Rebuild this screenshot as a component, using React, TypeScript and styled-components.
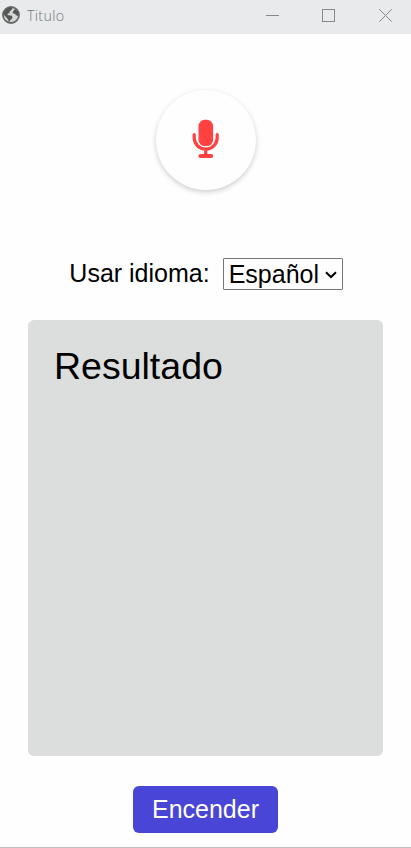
import React from "react";
import styled, { createGlobalStyle } from "styled-components";

const GlobalStyle = createGlobalStyle`
  *, *::before, *::after { box-sizing: border-box; }
  body {
    margin: 0;
    background: #fefefe;
    color: #000;
    font-family: "Liberation Sans", Arial, sans-serif;
  }
`;

const AppWindow = styled.div`
  display: flex;
  flex-direction: column;
  width: 100%;
  height: 848px;
  overflow: hidden;
  background: #fefefe;
  border-bottom: 1px solid #c3c3c3;
`;

const TitleBar = styled.header`
  display: flex;
  align-items: center;
  flex: none;
  height: 34px;
  padding-bottom: 3px;
  padding-left: 2px;
  background: #e8eaeb;
`;

const WindowTitle = styled.span`
  flex: 1;
  margin-left: 7px;
  color: #77797a;
  font: 300 14.3px/20px "Open Sans", "Segoe UI", sans-serif;
  letter-spacing: 0.3px;
`;

const WindowControls = styled.div`
  display: flex;
  gap: 43px;
  margin-right: 19px;

  svg { display: block; }
  svg:last-child { margin-left: 1px; }
`;

const Content = styled.main`
  display: flex;
  flex-direction: column;
  align-items: center;
  padding: 56px 28px 0;
`;

const MicButton = styled.button`
  display: flex;
  align-items: center;
  justify-content: center;
  width: 100px;
  height: 100px;
  padding: 0 0 2px;
  border: 0;
  border-radius: 50%;
  background: #fefefe;
  box-shadow: 0 2px 5px rgba(60, 70, 75, 0.26);
`;

const LanguageRow = styled.div`
  display: flex;
  align-items: center;
  gap: 13px;
  height: 32px;
  margin-top: 68px;
`;

const LanguageLabel = styled.label`
  padding: 0 0 2px 1px;
  font-size: 25px;
  line-height: 30px;
`;

const SelectBox = styled.div`
  position: relative;
  width: 120px;
  height: 32px;

  svg {
    position: absolute;
    top: 13px;
    right: 6px;
    pointer-events: none;
  }
`;

const LanguageSelect = styled.select`
  appearance: none;
  display: block;
  width: 100%;
  height: 100%;
  padding: 0 0 0 5px;
  border: 1px solid #767676;
  border-radius: 1px;
  background: #fefefe;
  color: #000;
  font: 25px/30px "Liberation Sans", Arial, sans-serif;
`;

const ResultPanel = styled.section`
  width: 355px;
  height: 436px;
  margin-top: 30px;
  padding: 24px 26px;
  border-radius: 6px;
  background: #dcdedd;
`;

const ResultText = styled.p`
  margin: 0;
  font-size: 37.5px;
  line-height: 44px;
`;

const PowerButton = styled.button`
  width: 145px;
  height: 47px;
  margin-top: 30px;
  padding: 0;
  border: 0;
  border-radius: 6px;
  background: #4945d6;
  color: #fff;
  font: 25px/47px "Liberation Sans", Arial, sans-serif;
`;

const GlobeSvg = styled.svg`
  flex: none;
  margin-bottom: 2px;
`;

const GlobeIcon = () => (
  <GlobeSvg width="18" height="18" viewBox="0 0 18 18" aria-hidden="true">
    <circle cx="9" cy="9" r="8" fill="#d6d7d7" stroke="#666767" strokeWidth="1.8" />
    <path d="M2 6 4.5 2.5 8 1.5 10.5 2 9.5 4 7.5 5.5 7.5 7 5 8 6.5 9.3 10 9.8 10.5 12 8 14.5 7 16.5 6 13.5 3.5 10.5 1.5 8.5Z" fill="#555656" />
    <path d="M11.5 4.5 13.5 3 16 6 16.5 10 14.5 9.5 13 8 10.5 7Z" fill="#555656" />
  </GlobeSvg>
);

const MicIcon = () => (
  <svg width="28" height="40" viewBox="0 0 28 40" aria-hidden="true">
    <rect x="6.5" y="0.8" width="14.6" height="26.2" rx="6.3" fill="#ff4141" />
    <path d="M2.2 15.6V18.5C2.2 25.2 7.3 30.1 13.7 30.1S25.2 25.2 25.2 18.5V15.6M13.7 30V37" fill="none" stroke="#ff4141" strokeWidth="3.2" strokeLinecap="round" />
    <rect x="6.5" y="35" width="14.6" height="4" rx="1.8" fill="#ff4141" />
  </svg>
);

export default function App() {
  return (
    <>
      <GlobalStyle />
      <AppWindow>
        <TitleBar>
          <GlobeIcon />
          <WindowTitle>Titulo</WindowTitle>
          <WindowControls>
            <svg width="13" height="13" viewBox="0 0 13 13" stroke="#878888" fill="none">
              <path d="M0 6.5H13" />
            </svg>
            <svg width="13" height="13" viewBox="0 0 13 13" stroke="#878888" fill="none">
              <rect x="0.5" y="0.5" width="12" height="12" />
            </svg>
            <svg width="13" height="13" viewBox="0 0 13 13" stroke="#878888" fill="none">
              <path d="M0.3 0.3 12.7 12.7M12.7 0.3 0.3 12.7" />
            </svg>
          </WindowControls>
        </TitleBar>
        <Content>
          <MicButton aria-label="Micrófono">
            <MicIcon />
          </MicButton>
          <LanguageRow>
            <LanguageLabel htmlFor="idioma">Usar idioma:</LanguageLabel>
            <SelectBox>
              <LanguageSelect id="idioma" defaultValue="es">
                <option value="es">Español</option>
              </LanguageSelect>
              <svg width="12" height="8" viewBox="0 0 12 8" aria-hidden="true">
                <path d="M1 1.2 6 6 11 1.2" fill="none" stroke="#000" strokeWidth="2" />
              </svg>
            </SelectBox>
          </LanguageRow>
          <ResultPanel>
            <ResultText>Resultado</ResultText>
          </ResultPanel>
          <PowerButton>Encender</PowerButton>
        </Content>
      </AppWindow>
    </>
  );
}
